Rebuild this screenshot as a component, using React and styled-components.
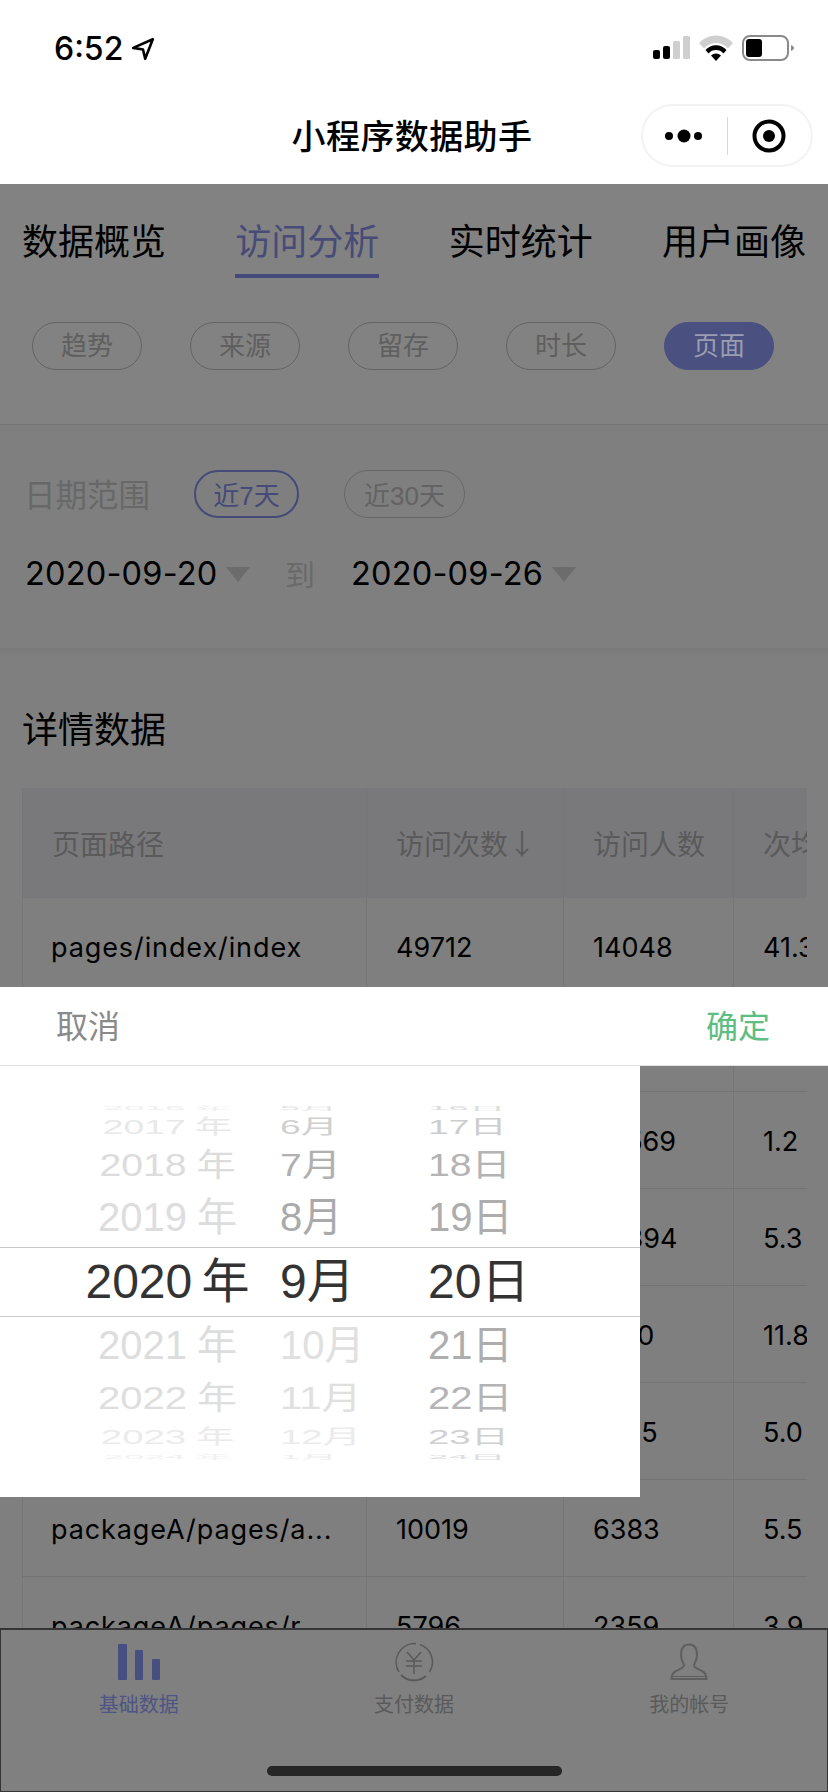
import React from 'react';
import styled, { createGlobalStyle } from 'styled-components';

const CJK = '"Noto Sans CJK SC", sans-serif';
const SF = 'Inter, "Noto Sans CJK SC", sans-serif';
const HELV = '"Liberation Sans", "Noto Sans CJK SC", sans-serif';

const Global = createGlobalStyle`
  html, body { margin: 0; padding: 0; background: #808080; }
  * { box-sizing: border-box; }
`;

const Screen = styled.div`
  position: relative;
  width: 828px;
  height: 1792px;
  overflow: hidden;
  display: flex;
  flex-direction: column;
  background: #808080;
  font-family: ${CJK};
  color: #000;
`;

const Header = styled.header`
  height: 184px;
  flex: none;
  background: #fff;
`;

const StatusBar = styled.div`
  height: 92px;
  padding: 0 34px 0 54px;
  display: flex;
  align-items: center;
  justify-content: space-between;
`;

const TimeWrap = styled.div`
  display: flex;
  align-items: center;
  gap: 8px;
  margin-top: 6px;
`;

const Time = styled.span`
  font-family: ${SF};
  font-size: 32px;
  font-weight: 500;
  line-height: 36px;
`;

const StatusIcons = styled.div`
  display: flex;
  align-items: center;
  margin-top: 6px;
`;

const NavBar = styled.div`
  height: 92px;
  padding: 12px 15px 17px;
  display: grid;
  grid-template-columns: 1fr auto 1fr;
  align-items: center;
`;

const NavTitle = styled.h1`
  grid-column: 2;
  margin: 0 0 2px -4px;
  font-size: 34px;
  font-weight: 500;
  line-height: 46px;
  letter-spacing: 0.4px;
`;

const Capsule = styled.div`
  grid-column: 3;
  justify-self: end;
  width: 172px;
  height: 63px;
  border: 2px solid #f3f3f3;
  border-radius: 32px;
  display: flex;
  align-items: center;
`;

const CapsuleSide = styled.div`
  flex: 1;
  height: 38px;
  display: flex;
  align-items: center;
  justify-content: center;
  border-right: ${(p) => (p.$divided ? '1px solid #d8d8d8' : 'none')};
`;

const Content = styled.main`
  flex: 1;
  min-height: 0;
  overflow: hidden;
`;

const NavSection = styled.section`
  padding: 32px 22px 54px;
  border-bottom: 1px solid #757575;
  background: #828282;
`;

const Tabs = styled.div`
  display: flex;
  justify-content: space-between;
`;

const Tab = styled.div`
  font-size: 36px;
  line-height: 46px;
  padding-bottom: 12px;
  border-bottom: 4px solid ${(p) => (p.$active ? '#45487a' : 'transparent')};
  color: ${(p) => (p.$active ? '#484b78' : '#000')};
`;

const Pills = styled.div`
  display: flex;
  gap: 48px;
  margin: 44px 0 0 10px;
`;

const Pill = styled.div`
  width: 110px;
  height: 48px;
  padding-bottom: 5px;
  border-radius: 24px;
  border: 1px solid ${(p) => (p.$active ? '#4a5080' : '#646464')};
  background: ${(p) => (p.$active ? '#4a5080' : 'transparent')};
  color: ${(p) => (p.$active ? '#9a9db2' : '#5f5f5f')};
  font-size: 26px;
  display: flex;
  align-items: center;
  justify-content: center;
`;

const DateSection = styled.section`
  padding: 44px 23px 54px 25px;
  background: #7f7f7f;
`;

const RangeRow = styled.div`
  display: flex;
  align-items: center;
  height: 50px;
`;

const RangeLabel = styled.span`
  font-size: 31.5px;
  color: #686868;
  width: 170px;
  margin: 0 0 2px -1px;
`;

const RangeChip = styled.div`
  width: ${(p) => p.$width}px;
  height: 48px;
  margin-right: 45px;
  padding-bottom: 2px;
  border-radius: 24px;
  border: ${(p) => (p.$active ? '2px solid #464a78' : '1px solid #686868')};
  color: ${(p) => (p.$active ? '#464a78' : '#636363')};
  font-size: 26px;
  font-family: ${HELV};
  display: flex;
  align-items: center;
  justify-content: center;
`;

const DateRow = styled.div`
  display: flex;
  align-items: center;
  height: 40px;
  margin-top: 35px;
`;

const DateText = styled.span`
  flex: none;
  white-space: nowrap;
  font-family: ${SF};
  font-size: 32.5px;
  line-height: 40px;
  letter-spacing: 0.2px;
  width: ${(p) => p.$width}px;
`;

const Caret = styled.i`
  width: 0;
  height: 0;
  margin: 0 36px 0 11px;
  border-left: 12px solid transparent;
  border-right: 12px solid transparent;
  border-top: 15px solid #6c6c6c;
`;

const To = styled.span`
  font-size: 30px;
  color: #6a6a6a;
  margin: 0 36px 3px -1px;
`;

const Band = styled.div`
  height: 8px;
  background: linear-gradient(#7a7a7a, #7f7f7f);
`;

const DetailSection = styled.section`
  padding: 48px 21px 0 22px;
  background: #7f7f7f;
`;

const DetailTitle = styled.h2`
  margin: 0 0 38px 0;
  font-size: 36px;
  font-weight: 400;
  line-height: 46px;
`;

const Table = styled.div`
  overflow: hidden;
`;

const TableRow = styled.div`
  display: grid;
  grid-template-columns: 344px 197px 170px 120px;
  height: ${(p) => (p.$head ? 110 : 97)}px;
  background: ${(p) => (p.$head ? '#79797c' : 'transparent')};
  border-bottom: ${(p) => (p.$head ? 'none' : '1px solid #747474')};
`;

const Cell = styled.div`
  display: flex;
  align-items: center;
  padding: 2px 0 0 ${(p) => (p.$path ? 28 : 29)}px;
  white-space: nowrap;
  font-family: ${SF};
  font-size: 27px;
  letter-spacing: ${(p) => (p.$path ? 0.9 : 0)}px;
  border-left: 1px solid #767676;
`;

const HeadCell = styled(Cell)`
  padding-top: 0;
  font-family: ${CJK};
  font-size: 28px;
  letter-spacing: 0;
  color: #5a5a5a;
  border-left: 1px solid #767678;
`;

const TabBar = styled.nav`
  flex: none;
  height: 164px;
  background: #808080;
  border: 1px solid #343434;
  border-width: 2px 1px 1px;
  display: grid;
  grid-template-columns: 1fr 1fr 1fr;
  position: relative;
`;

const TabItem = styled.div`
  display: flex;
  flex-direction: column;
  align-items: center;
  padding-top: 11px;
  color: ${(p) => (p.$active ? '#4e5484' : '#5a5a5a')};
`;

const TabIcon = styled.div`
  height: 42px;
  display: flex;
  align-items: center;
`;

const TabLabel = styled.span`
  font-size: 20px;
  line-height: 28px;
  margin-top: 7px;
`;

const HomeBar = styled.div`
  position: absolute;
  left: 266px;
  bottom: 15px;
  width: 295px;
  height: 10px;
  border-radius: 5px;
  background: #262626;
`;

const PickerHead = styled.div`
  position: absolute;
  top: 987px;
  left: 0;
  width: 828px;
  height: 79px;
  padding: 0 58px 5px 56px;
  background: #fff;
  border-bottom: 1px solid #e2e2e2;
  display: flex;
  align-items: center;
  justify-content: space-between;
  font-size: 32px;
`;

const PickerAction = styled.span`
  color: ${(p) => (p.$ok ? '#5dbd82' : '#8a8a8a')};
`;

const PickerBody = styled.div`
  position: absolute;
  top: 1066px;
  left: 0;
  width: 640px;
  height: 431px;
  padding-top: 39px;
  background: #fff;
  font-family: ${HELV};
`;

const WheelRow = styled.div`
  height: ${(p) => p.$h}px;
  display: flex;
  align-items: center;
  border: ${(p) => (p.$selected ? '1px solid #c8c8c8' : 'none')};
  border-width: 1px 0;
  font-size: ${(p) => (p.$selected ? 48 : 40)}px;
  word-spacing: ${(p) => (p.$selected ? -4 : -1)}px;
`;

const WheelCell = styled.div`
  flex: none;
  width: ${(p) => p.$w}px;
  padding-left: ${(p) => p.$pad}px;
  text-align: ${(p) => (p.$center ? 'center' : 'left')};
  white-space: nowrap;
  line-height: 1;
`;

const WheelText = styled.span`
  display: inline-block;
  color: ${(p) => p.$color};
  transform: scale(${(p) => p.$sx}, ${(p) => p.$sy});
  transform-origin: ${(p) => (p.$center ? 'center' : 'left center')};
`;

const tabs = ['数据概览', '访问分析', '实时统计', '用户画像'];
const pills = ['趋势', '来源', '留存', '时长', '页面'];

const head = ['页面路径', '访问次数↓', '访问人数', '次均时长'];
const rows = [
  ['pages/index/index', '49712', '14048', '41.3'],
  ['', '', '', ''],
  ['', '', '28569', '1.2'],
  ['', '', '20394', '5.3'],
  ['', '', '9120', '11.8'],
  ['', '', '7635', '5.0'],
  ['packageA/pages/a...', '10019', '6383', '5.5'],
  ['packageA/pages/r...', '5796', '2359', '3.9'],
];

// wheel rows from top to bottom, squeezed towards the ends like the iOS picker
const wheel = [
  { h: 6, sx: 0.92, sy: 0.12, y: '2016 年', m: '5月', d: '16日', yc: '#eeeeee', mc: '#e4e4e4', dc: '#dddddd' },
  { h: 32, sx: 0.93, sy: 0.5, y: '2017 年', m: '6月', d: '17日', yc: '#e8e8e8', mc: '#cfcfcf', dc: '#cdcdcd' },
  { h: 44, sx: 0.98, sy: 0.8, y: '2018 年', m: '7月', d: '18日', yc: '#dcdcdc', mc: '#b0b0b0', dc: '#b4b4b4' },
  { h: 60, sx: 1, sy: 1, y: '2019 年', m: '8月', d: '19日', yc: '#dddddd', mc: '#aaaaaa', dc: '#adadad' },
  { h: 70, sx: 1, sy: 1, y: '2020 年', m: '9月', d: '20日', yc: '#333333', mc: '#333333', dc: '#333333', selected: true },
  { h: 56, sx: 1, sy: 1, y: '2021 年', m: '10月', d: '21日', yc: '#dddddd', mc: '#e0e0e0', dc: '#adadad' },
  { h: 50, sx: 1, sy: 0.8, y: '2022 年', m: '11月', d: '22日', yc: '#dedede', mc: '#e0e0e0', dc: '#b4b4b4' },
  { h: 28, sx: 0.96, sy: 0.5, y: '2023 年', m: '12月', d: '23日', yc: '#ebebeb', mc: '#ebebeb', dc: '#d0d0d0' },
  { h: 12, sx: 0.92, sy: 0.15, y: '2024 年', m: '1月', d: '24日', yc: '#f0f0f0', mc: '#eeeeee', dc: '#dddddd' },
];

function StatusGlyphs() {
  return (
    <StatusIcons>
      <svg width="142" height="28" viewBox="0 0 142 28">
        <rect x="1" y="15" width="7" height="9" rx="2" fill="#000" />
        <rect x="11" y="11" width="7" height="13" rx="2" fill="#000" />
        <rect x="21" y="6" width="7" height="18" rx="1.5" fill="#cfcfcf" />
        <rect x="31" y="1" width="7" height="23" rx="1.5" fill="#cfcfcf" />
        <path d="M47 8 A23 23 0 0 1 81 8 L76 13.5 A16 16 0 0 0 52 13.5 Z" fill="#cfcfcf" />
        <path d="M53.5 15 A14 14 0 0 1 74.5 15 L71.5 18.5 A10 10 0 0 0 56.5 18.5 Z" fill="#000" />
        <path d="M59 20.5 A7 7 0 0 1 69 20.5 L64 26 Z" fill="#000" />
        <rect x="91" y="1" width="45" height="24" rx="7" fill="none" stroke="#8a8a8a" strokeWidth="2" />
        <rect x="94" y="4" width="16" height="18" rx="3" fill="#000" />
        <path d="M139 10 C141 11 142 12 142 13 C142 14 141 15 139 16 Z" fill="#8a8a8a" />
      </svg>
    </StatusIcons>
  );
}

export default function App() {
  return (
    <Screen>
      <Global />
      <Header>
        <StatusBar>
          <TimeWrap>
            <Time>6:52</Time>
            <svg width="24" height="24" viewBox="0 0 22 22">
              <path d="M20 2 L2 10 L11 11.5 L13 20 Z" fill="none" stroke="#000" strokeWidth="2.4" strokeLinejoin="round" />
            </svg>
          </TimeWrap>
          <StatusGlyphs />
        </StatusBar>
        <NavBar>
          <NavTitle>小程序数据助手</NavTitle>
          <Capsule>
            <CapsuleSide $divided>
              <svg width="42" height="16" viewBox="0 0 42 16">
                <circle cx="5" cy="8" r="4" fill="#000" />
                <circle cx="20" cy="8" r="6.5" fill="#000" />
                <circle cx="34" cy="8" r="4" fill="#000" />
              </svg>
            </CapsuleSide>
            <CapsuleSide>
              <svg width="36" height="36" viewBox="0 0 36 36">
                <circle cx="18" cy="18" r="14.5" fill="none" stroke="#000" strokeWidth="4" />
                <circle cx="18" cy="18" r="6" fill="#000" />
              </svg>
            </CapsuleSide>
          </Capsule>
        </NavBar>
      </Header>

      <Content>
        <NavSection>
          <Tabs>
            {tabs.map((t) => (
              <Tab key={t} $active={t === '访问分析'}>{t}</Tab>
            ))}
          </Tabs>
          <Pills>
            {pills.map((p) => (
              <Pill key={p} $active={p === '页面'}>{p}</Pill>
            ))}
          </Pills>
        </NavSection>

        <DateSection>
          <RangeRow>
            <RangeLabel>日期范围</RangeLabel>
            <RangeChip $width={105} $active>近7天</RangeChip>
            <RangeChip $width={121}>近30天</RangeChip>
          </RangeRow>
          <DateRow>
            <DateText $width={190}>2020-09-20</DateText>
            <Caret />
            <To>到</To>
            <DateText $width={190}>2020-09-26</DateText>
            <Caret />
          </DateRow>
        </DateSection>
        <Band />

        <DetailSection>
          <DetailTitle>详情数据</DetailTitle>
          <Table>
            <TableRow $head>
              {head.map((h) => (
                <HeadCell key={h}>{h}</HeadCell>
              ))}
            </TableRow>
            {rows.map((r, i) => (
              <TableRow key={i}>
                {r.map((c, j) => (
                  <Cell key={j} $path={j === 0}>{c}</Cell>
                ))}
              </TableRow>
            ))}
          </Table>
        </DetailSection>
      </Content>

      <TabBar>
        <TabItem $active>
          <TabIcon>
            <svg width="42" height="38" viewBox="0 0 42 38">
              <rect x="0" y="1" width="9" height="36" rx="1" fill="#474e80" />
              <rect x="17" y="7" width="8" height="30" rx="1" fill="#474e80" />
              <rect x="34" y="16" width="8" height="21" rx="1" fill="#474e80" />
            </svg>
          </TabIcon>
          <TabLabel>基础数据</TabLabel>
        </TabItem>
        <TabItem>
          <TabIcon>
            <svg width="42" height="42" viewBox="0 0 42 42" fill="none" stroke="#5a5a5a">
              <path d="M27 3.5 A18.5 18.5 0 0 1 36.5 31" strokeWidth="1.6" />
              <path d="M33 35 A18.5 18.5 0 0 1 8 34" strokeWidth="2" />
              <path d="M6 31 A18.5 18.5 0 0 1 23 2.6" strokeWidth="1.6" />
              <path d="M14 11 L21 19 L28 11 M13 20 H29 M13 25 H29 M21 19 V33" strokeWidth="1.5" />
            </svg>
          </TabIcon>
          <TabLabel>支付数据</TabLabel>
        </TabItem>
        <TabItem>
          <TabIcon>
            <svg width="38" height="38" viewBox="0 0 38 38" fill="none" stroke="#5f5f5f" strokeWidth="2">
              <path d="M11 12 C11 5 14 1.5 19 1.5 C24 1.5 27 5 27 12 C27 17 25 20 24 22 C24 25 28 26 32 28 C35 29.5 36.5 32 36.5 36 H1.5 C1.5 32 3 29.5 6 28 C10 26 14 25 14 22 C13 20 11 17 11 12 Z" />
              <path d="M2 33.5 H36" strokeWidth="1" />
            </svg>
          </TabIcon>
          <TabLabel>我的帐号</TabLabel>
        </TabItem>
        <HomeBar />
      </TabBar>

      <PickerHead>
        <PickerAction>取消</PickerAction>
        <PickerAction $ok>确定</PickerAction>
      </PickerHead>
      <PickerBody>
        {wheel.map((w) => (
          <WheelRow key={w.y} $h={w.h} $selected={w.selected}>
            <WheelCell $w={280} $pad={55} $center>
              <WheelText $center $color={w.yc} $sx={w.sx} $sy={w.sy}>{w.y}</WheelText>
            </WheelCell>
            <WheelCell $w={148} $pad={0}>
              <WheelText $color={w.mc} $sx={w.sx} $sy={w.sy}>{w.m}</WheelText>
            </WheelCell>
            <WheelCell $w={120} $pad={0}>
              <WheelText $color={w.dc} $sx={w.sx} $sy={w.sy}>{w.d}</WheelText>
            </WheelCell>
          </WheelRow>
        ))}
      </PickerBody>
    </Screen>
  );
}
